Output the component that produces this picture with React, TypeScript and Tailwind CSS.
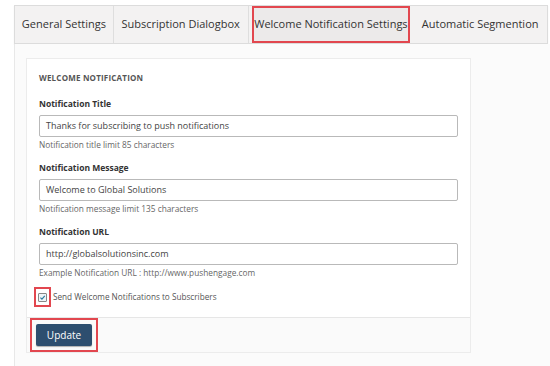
import React from "react";

const tabs = [
  { label: "General Settings", w: "w-[99px]" },
  { label: "Subscription Dialogbox", w: "w-[135px]" },
  { label: "Welcome Notification Settings", w: "w-[165px]", active: true },
  { label: "Automatic Segmention", w: "w-[134px]" },
];

function Field({ label, value, help }: { label: string; value: string; help: string }) {
  return (
    <div className="flex flex-col">
      <div className="text-[8.5px] font-bold leading-[12px] text-[#333]">{label}</div>
      <div className="mt-[5px] flex h-[22px] w-[419px] items-center rounded-[2px] border border-[#b9b9b9] bg-white px-[6px] text-[9px] text-[#444]">
        {value}
      </div>
      <div className="mt-[2px] text-[8.3px] leading-[11px] text-[#666]">{help}</div>
    </div>
  );
}

export default function App() {
  return (
    <div className="h-[366px] w-[550px] overflow-hidden bg-white pt-[5px] font-['Open_Sans',sans-serif]">
      {/* tab strip */}
      <div className="ml-[14px] flex h-[39px] w-[534px] border border-[#dcdcdc] bg-[#f3f2f2] shadow-[0_1px_1px_rgba(0,0,0,0.08)]">
        {tabs.map((t) =>
          t.active ? (
            <div key={t.label} className={`${t.w} flex items-center justify-center px-[3px]`}>
              <div className="flex h-[37px] w-full items-center justify-center whitespace-nowrap border-2 border-[#e2474f] bg-[#eceaea] text-[11px] text-[#333]">
                {t.label}
              </div>
            </div>
          ) : (
            <div
              key={t.label}
              className={`${t.w} flex items-center justify-center whitespace-nowrap border-r border-[#dedede] text-[11px] text-[#333] last:border-r-0`}
            >
              {t.label}
            </div>
          )
        )}
      </div>

      {/* panel */}
      <div className="ml-[14px] h-[330px] border-l border-[#e8e8e8] bg-[#fbfbfb] pl-[11px] pt-[14px]">
        <div className="w-[445px] border border-[#ececec] bg-white">
          <div className="px-[12px] pt-[14px] pb-[10px]">
            <div className="text-[8px] font-bold leading-[10px] tracking-[0.2px] text-[#555]">WELCOME NOTIFICATION</div>
            <div className="mt-[15px] flex flex-col gap-[12px]">
              <Field
                label="Notification Title"
                value="Thanks for subscribing to push notifications"
                help="Notification title limit 85 characters"
              />
              <Field
                label="Notification Message"
                value="Welcome to Global Solutions"
                help="Notification message limit 135 characters"
              />
              <Field
                label="Notification URL"
                value="http://globalsolutionsinc.com"
                help="Example Notification URL : http://www.pushengage.com"
              />
            </div>
            <div className="mt-[9px] flex items-center">
              <div className="-ml-[5px] flex h-[20px] w-[17px] items-center justify-center border-2 border-[#e2474f]">
                <div className="flex h-[9px] w-[9px] items-center justify-center rounded-[1px] border border-[#888] bg-[#eef5f8]">
                  <svg width="7" height="7" viewBox="0 0 10 10">
                    <path d="M2 5.2 L4.2 7.4 L8.2 2.6" fill="none" stroke="#2a7a9c" strokeWidth="1.6" />
                  </svg>
                </div>
              </div>
              <span className="ml-[2px] text-[8.2px] text-[#555]">Send Welcome Notifications to Subscribers</span>
            </div>
          </div>
          <div className="h-[35px] border-t border-[#e6e6e6] bg-[#fafafa] pl-[3px]">
            <div className="flex h-[34px] w-[68px] items-center justify-center border-2 border-[#e2474f]">
              <button className="h-[22px] w-[56px] rounded-[2px] bg-[#2d4e6f] text-[10px] text-white shadow-[0_1px_1px_rgba(0,0,0,0.3)]">
                Update
              </button>
            </div>
          </div>
        </div>
      </div>
    </div>
  );
}
